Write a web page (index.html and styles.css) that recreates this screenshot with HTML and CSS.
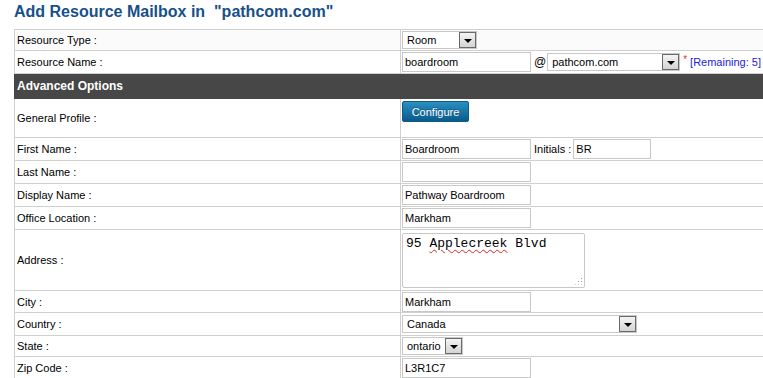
FILE: index.html
```html
<!DOCTYPE html>
<html lang="en">
<head>
  <meta charset="UTF-8" />
  <title>Add Resource Mailbox</title>
  <link rel="stylesheet" href="styles.css">
</head>
<body>
  <h1>Add Resource Mailbox in &nbsp;"pathcom.com"</h1>

  <table class="form">
    <tr class="r-type">
      <td class="lbl">Resource Type :</td>
      <td class="val">
        <div class="sel w-room"><span class="txt">Room</span><span class="arrow"></span></div>
      </td>
    </tr>
    <tr class="r-name">
      <td class="lbl">Resource Name :</td>
      <td class="val">
        <div class="line">
          <div class="inp">boardroom</div>
          <span class="at">@</span>
          <div class="sel w-domain"><span class="txt">pathcom.com</span><span class="arrow"></span></div>
          <span class="req">*</span>
          <span class="remain">[Remaining: 5]</span>
        </div>
      </td>
    </tr>
    <tr class="head">
      <td colspan="2">Advanced Options</td>
    </tr>
    <tr class="r-profile">
      <td class="lbl">General Profile :</td>
      <td class="val top"><button class="btn">Configure</button></td>
    </tr>
    <tr class="r-std">
      <td class="lbl">First Name :</td>
      <td class="val">
        <div class="line">
          <div class="inp">Boardroom</div>
          <span class="ini">Initials :</span>
          <div class="inp small">BR</div>
        </div>
      </td>
    </tr>
    <tr class="r-std">
      <td class="lbl">Last Name :</td>
      <td class="val"><div class="inp"></div></td>
    </tr>
    <tr class="r-std">
      <td class="lbl">Display Name :</td>
      <td class="val"><div class="inp">Pathway Boardroom</div></td>
    </tr>
    <tr class="r-std">
      <td class="lbl">Office Location :</td>
      <td class="val"><div class="inp">Markham</div></td>
    </tr>
    <tr class="r-addr">
      <td class="lbl">Address :</td>
      <td class="val">
        <div class="area">95 <span class="typo">Applecreek</span> Blvd<span class="grip"></span></div>
      </td>
    </tr>
    <tr class="r-city">
      <td class="lbl">City :</td>
      <td class="val"><div class="inp">Markham</div></td>
    </tr>
    <tr class="r-std">
      <td class="lbl">Country :</td>
      <td class="val">
        <div class="sel w-country"><span class="txt">Canada</span><span class="arrow"></span></div>
      </td>
    </tr>
    <tr class="r-short">
      <td class="lbl">State :</td>
      <td class="val">
        <div class="sel w-state"><span class="txt">ontario</span><span class="arrow"></span></div>
      </td>
    </tr>
    <tr class="r-city">
      <td class="lbl">Zip Code :</td>
      <td class="val"><div class="inp">L3R1C7</div></td>
    </tr>
  </table>
</body>
</html>
```

FILE: styles.css
```css
* { margin: 0; padding: 0; box-sizing: border-box; }

html, body {
  overflow: hidden;
  background: #fff;
}

body {
  font-family: 'Liberation Sans', Arial, sans-serif;
  font-size: 11px;
  color: #000;
  padding: 0 0 0 14px;
}

h1 {
  font-size: 16px;
  font-weight: bold;
  color: #17508a;
  line-height: 22px;
  padding-top: 1px;
  height: 29px;
}

.form {
  border-collapse: collapse;
  width: 780px;
  table-layout: fixed;
}

.form td {
  border: 1px solid #d0d0d0;
  vertical-align: middle;
  padding: 0 1px;
}

.form .lbl {
  width: 386px;
  padding-left: 2px;
}

.r-type td { height: 21px; background: #fbfbfb; }
.r-name td { height: 23px; }
.r-profile td { height: 39px; }
.r-std td { height: 23px; }
.r-city td { height: 22px; }
.r-short td { height: 21px; }
.r-addr td { height: 61px; }

.head td {
  height: 25px;
  background: #474747;
  color: #fff;
  font-weight: bold;
  font-size: 12px;
  padding-left: 2px;
  border-color: #474747;
}

.val.top {
  vertical-align: top;
  padding-top: 2px;
}

.line {
  display: flex;
  align-items: center;
}

.inp {
  width: 129px;
  height: 20px;
  border: 1px solid #c8c8c8;
  background: #fff;
  padding: 0 2px;
  line-height: 18px;
}

.inp.small {
  width: 78px;
}

.at {
  margin: 0 1px 0 3px;
  font-size: 12px;
}

.ini {
  margin: 0 2px 0 3px;
}

.req {
  color: #e03030;
  margin: 0 3px 0 3px;
  font-size: 10px;
  align-self: flex-start;
  margin-top: 2px;
}

.remain {
  color: #2222dd;
  font-size: 11px;
}

.sel {
  display: flex;
  align-items: center;
  height: 18px;
  border: 1px solid #c8c8c8;
  background: #fff;
  padding: 0 0 0 4px;
}

.sel .txt {
  flex-grow: 1;
}

.sel .arrow {
  width: 17px;
  height: 16px;
  border: 1px solid #6a6a6a;
  background: linear-gradient(#f4f4f4, #d4d4d4);
  position: relative;
}

.sel .arrow::after {
  content: "";
  position: absolute;
  left: 4px;
  top: 6px;
  border-left: 4px solid transparent;
  border-right: 4px solid transparent;
  border-top: 4px solid #000;
}

.w-room { width: 75px; }
.w-domain { width: 133px; }
.w-country { width: 235px; }
.w-state { width: 61px; }

.btn {
  font-family: 'Liberation Sans', Arial, sans-serif;
  font-size: 11px;
  color: #fff;
  width: 67px;
  height: 21px;
  border: 1px solid #0c5d8a;
  border-radius: 2px;
  background: linear-gradient(#2a8fc0, #0a5a8c);
  text-shadow: 0 -1px 0 rgba(0,0,0,0.3);
}

.area {
  position: relative;
  width: 183px;
  height: 55px;
  border: 1px solid #c8c8c8;
  border-radius: 2px;
  font-family: 'Liberation Mono', 'Courier New', monospace;
  font-size: 13px;
  padding: 2px 3px;
  line-height: 15px;
}

.typo {
  text-decoration: underline wavy #e02020;
  text-decoration-thickness: 1px;
  text-underline-offset: 2px;
}

.grip {
  position: absolute;
  right: 2px;
  bottom: 2px;
  width: 8px;
  height: 8px;
  background: radial-gradient(circle, #999 0.8px, transparent 1px) 0 0 / 3px 3px;
  clip-path: polygon(100% 0, 100% 100%, 0 100%);
}
```
